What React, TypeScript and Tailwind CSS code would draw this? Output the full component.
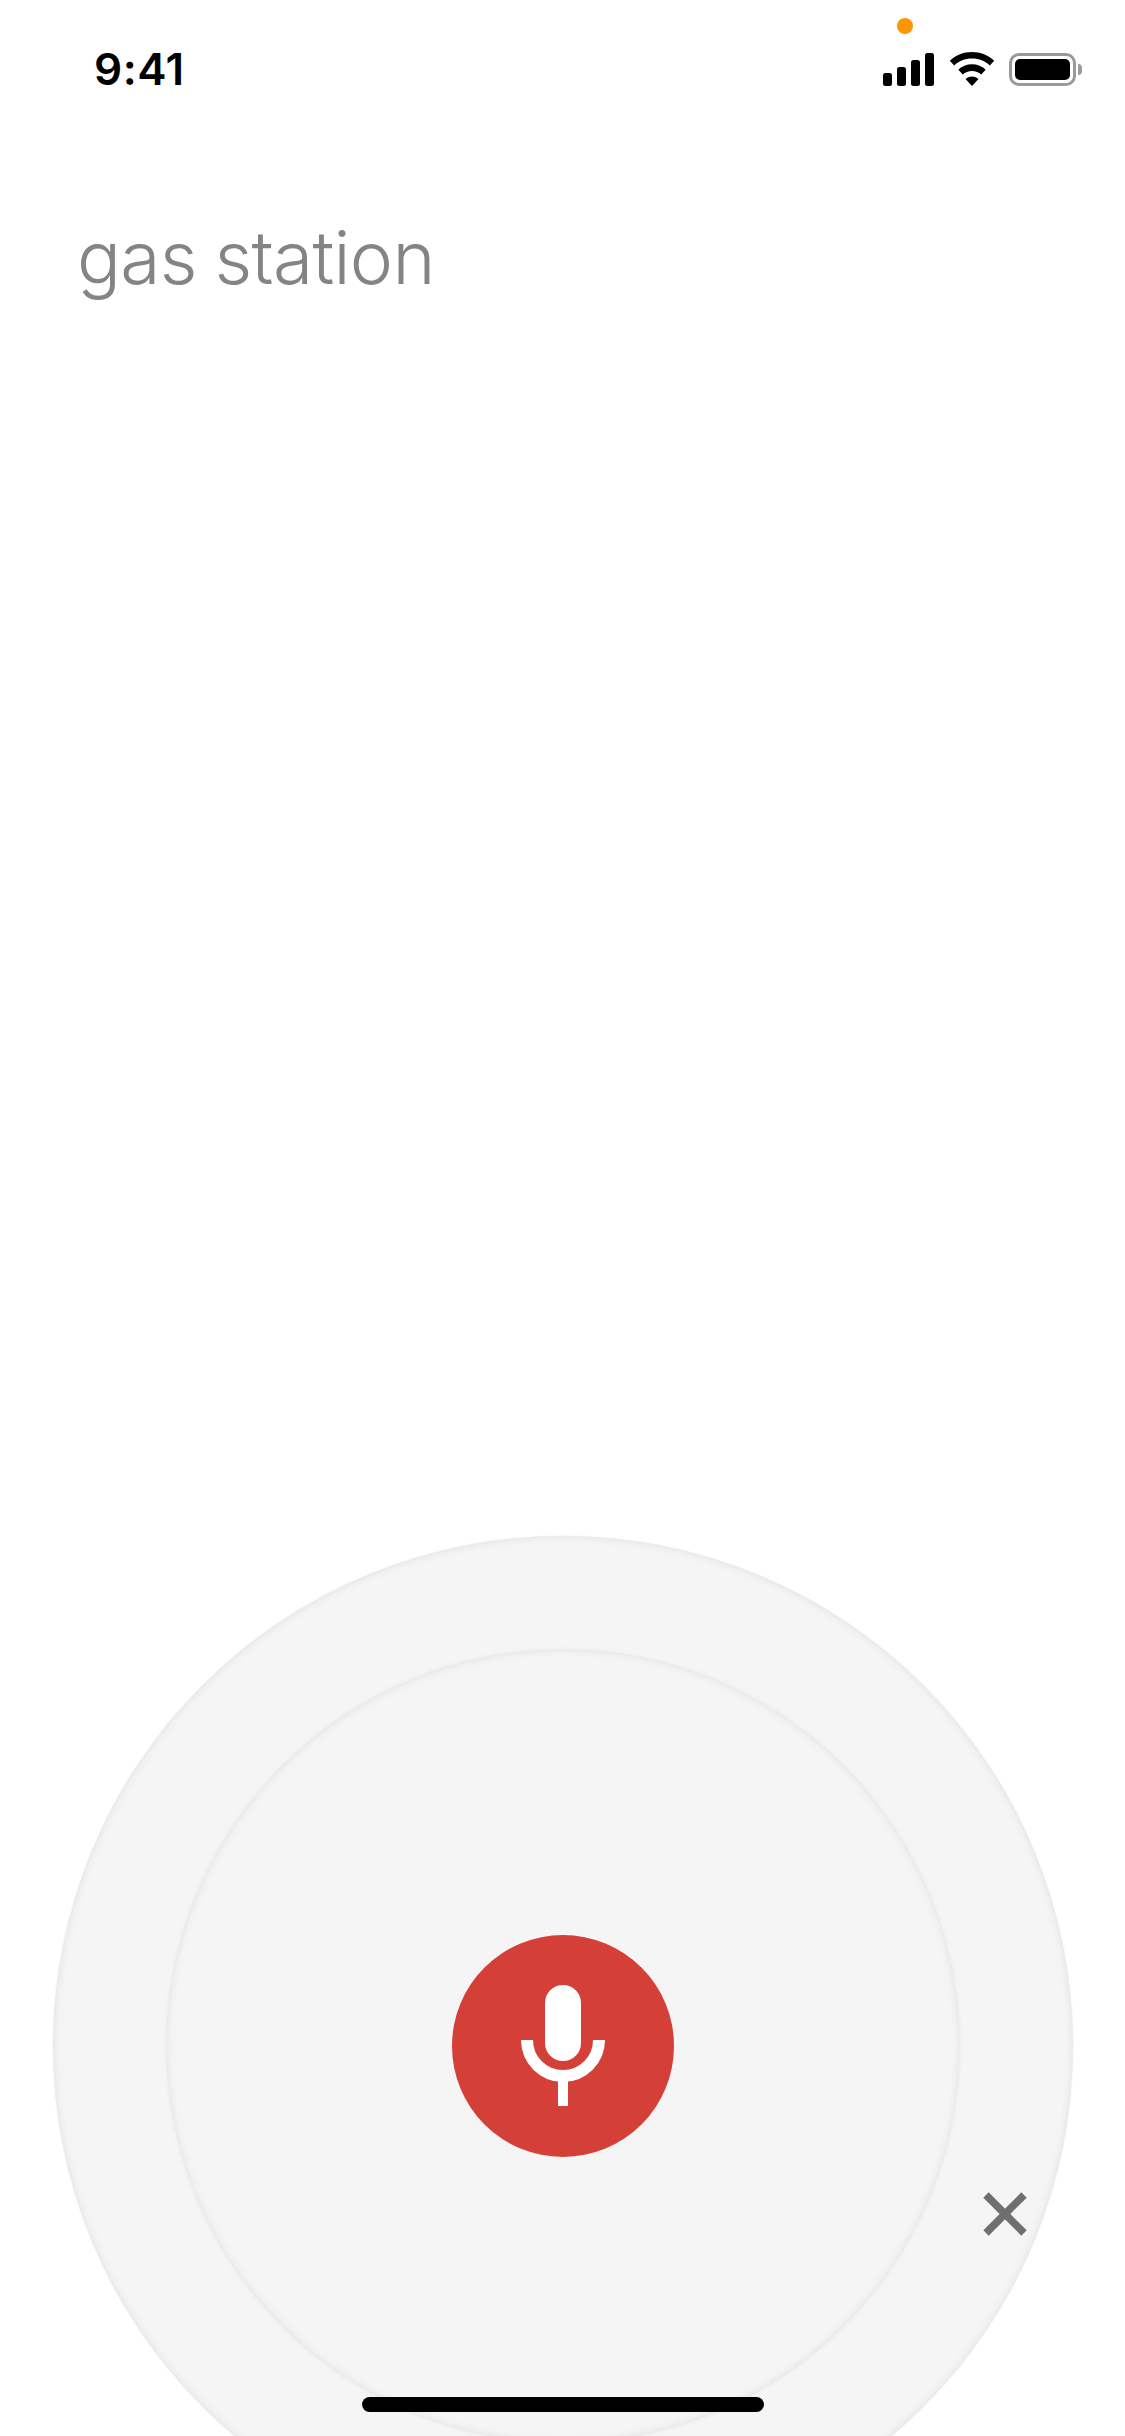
import { X } from "lucide-react"

function SignalIcon() {
  return (
    <svg width="52" height="33" viewBox="0 0 52 33" fill="#000">
      <rect x="0" y="20" width="9" height="13" rx="2.5" />
      <rect x="14" y="14" width="9" height="19" rx="2.5" />
      <rect x="28" y="7" width="9" height="26" rx="2.5" />
      <rect x="42" y="0" width="9" height="33" rx="2.5" />
    </svg>
  )
}

function WifiIcon() {
  return (
    <svg width="46" height="34" viewBox="0 0 46 34" fill="#000">
      <path d="M23 0C14.5 0 6.7 3.3.8 8.8l4.4 4.7C9.9 9.2 16.1 6.6 23 6.6s13.100 2.600 17.800 6.900l4.400-4.700C39.300 3.300 31.500 0 23 0z" />
      <path d="M23 12.300c-5.300 0-10.100 2-13.700 5.400l4.500 4.800c2.400-2.200 5.600-3.600 9.200-3.600s6.800 1.400 9.200 3.600l4.500-4.800c-3.600-3.400-8.400-5.400-13.700-5.400z" />
      <path d="M23 24.500c-2.500 0-4.800 1-6.500 2.500L23 34l6.500-7c-1.700-1.500-4-2.500-6.500-2.500z" />
    </svg>
  )
}

function BatteryIcon() {
  return (
    <div className="flex items-center">
      <div className="w-[67px] h-[33px] rounded-[10px] border-[3px] border-[#9a9a9a] p-[3px]">
        <div className="w-full h-full rounded-[5px] bg-black" />
      </div>
      <div className="w-[4px] h-[11px] ml-[2px] rounded-r-full bg-[#9a9a9a]" />
    </div>
  )
}

function MicIcon() {
  return (
    <svg width="84" height="122" viewBox="0 0 84 122" fill="none">
      <rect x="24" y="0" width="36" height="76" rx="18" fill="#fff" />
      <path d="M6 55a36 36 0 0 0 72 0" stroke="#fff" strokeWidth="12" />
      <rect x="37" y="88" width="10" height="33" fill="#fff" />
    </svg>
  )
}

export default function App() {
  return (
    <div className="relative w-[1125px] h-[2436px] overflow-hidden bg-white font-['Inter',sans-serif]">
      <div className="relative h-[136px]">
        <div className="absolute left-[897px] top-[18px] w-[16px] h-[16px] rounded-full bg-[#ff9500]" />
        <div className="flex items-start justify-between pl-[94px] pr-[43px] pt-[52px]">
          <span className="text-[44px] leading-[34px] font-semibold tracking-[0.5px] text-black">9:41</span>
          <div className="flex items-center gap-[14px]">
            <SignalIcon />
            <WifiIcon />
            <BatteryIcon />
          </div>
        </div>
      </div>

      <h1 className="pl-[77px] pt-[82px] text-[73px] leading-[80px] font-light tracking-[-0.7px] [word-spacing:-2px] text-[#848484]">
        gas station
      </h1>

      <div className="mt-[1238px] mx-auto w-[1020px] h-[1020px] rounded-full bg-[#f5f5f5] shadow-[inset_0_0_8px_#dedede,0_0_2px_#ececec] flex items-center justify-center">
        <div className="w-[794px] h-[794px] rounded-full bg-[#f5f5f5] shadow-[inset_0_0_8px_#dedede,0_0_4px_#ececec] flex items-center justify-center">
          <button className="w-[222px] h-[222px] rounded-full bg-[#d44037] flex items-center justify-center">
            <MicIcon />
          </button>
        </div>
      </div>

      <X className="absolute left-[967px] top-[2176px] w-[76px] h-[76px] text-[#6f6f6f]" strokeWidth={2.4} strokeLinecap="butt" />

      <div className="absolute left-[362px] top-[2397px] w-[402px] h-[15px] rounded-full bg-black" />
    </div>
  )
}
